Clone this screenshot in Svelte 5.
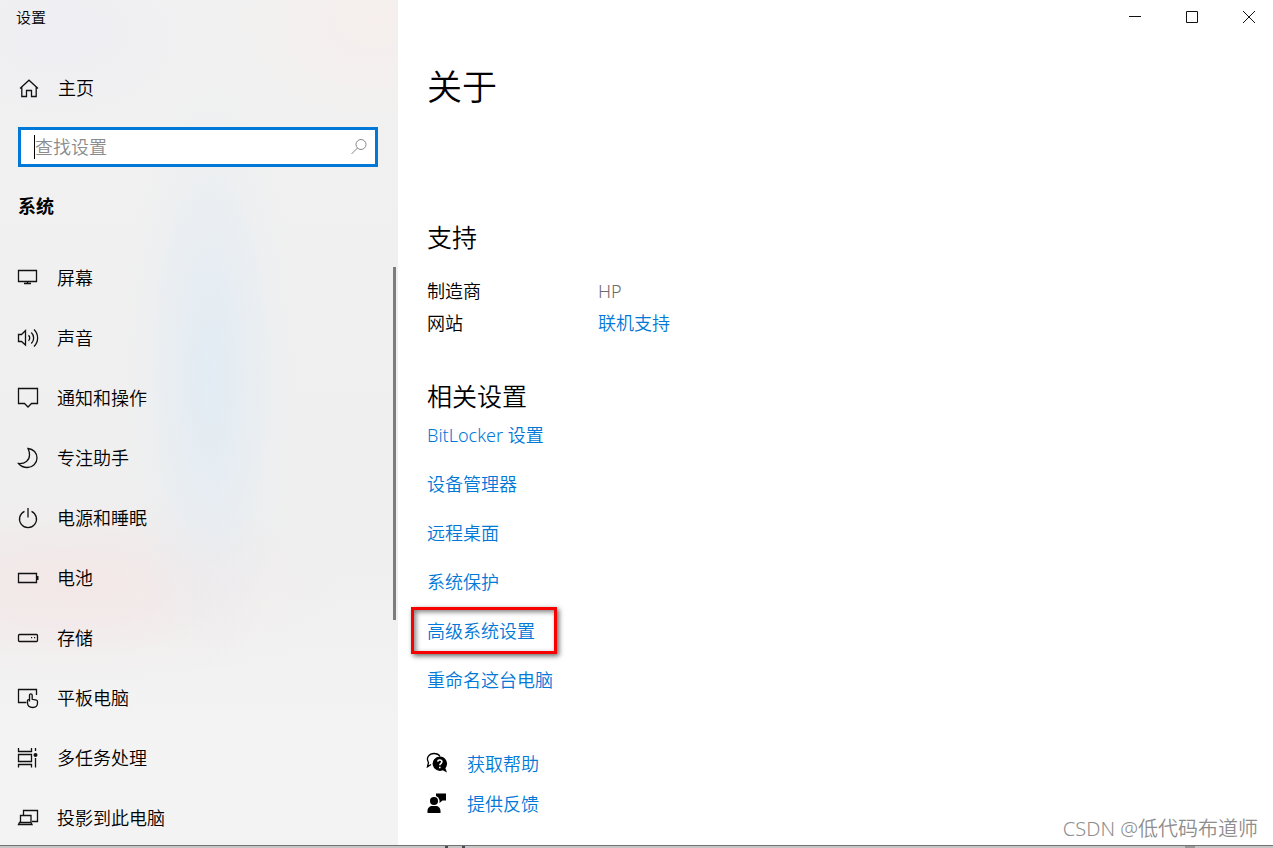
<script lang="ts">
    type IconName =
        | "display"
        | "sound"
        | "notifications"
        | "focus"
        | "power"
        | "battery"
        | "storage"
        | "tablet"
        | "multitask"
        | "project";

    const navItems: { icon: IconName; label: string }[] = [
        { icon: "display", label: "屏幕" },
        { icon: "sound", label: "声音" },
        { icon: "notifications", label: "通知和操作" },
        { icon: "focus", label: "专注助手" },
        { icon: "power", label: "电源和睡眠" },
        { icon: "battery", label: "电池" },
        { icon: "storage", label: "存储" },
        { icon: "tablet", label: "平板电脑" },
        { icon: "multitask", label: "多任务处理" },
        { icon: "project", label: "投影到此电脑" },
    ];

    const relatedLinks = [
        { label: "BitLocker 设置" },
        { label: "设备管理器" },
        { label: "远程桌面" },
        { label: "系统保护" },
        { label: "高级系统设置", marked: true },
        { label: "重命名这台电脑" },
    ];

    let query = $state("");
</script>

<div class="window">
    <aside class="sidebar">
        <div class="app-title">设置</div>

        <a class="home" href="#home">
            <svg class="icon" viewBox="0 0 22 22">
                <path d="M2 11.5 11 3.2l9 8.3M3.8 10v9.5h4.7v-6h5v6h4.7V10" />
            </svg>
            主页
        </a>

        <label class="search">
            <span class="caret"></span>
            <input type="text" placeholder="查找设置" aria-label="查找设置" bind:value={query} />
            <svg class="search-icon" viewBox="0 0 18 18">
                <circle cx="11" cy="6.5" r="5" />
                <path d="M7.5 10 1.5 16" />
            </svg>
        </label>

        <h2 class="category">系统</h2>

        <nav>
            {#each navItems as item (item.icon)}
                <a class="nav-item" href="#{item.icon}">
                    <svg class="icon" viewBox="0 0 22 22">
                        {#if item.icon === "display"}
                            <path d="M1.5 3.5h18v11h-18zM10.5 14.5v2M7 16.5h7" />
                        {:else if item.icon === "sound"}
                            <path d="M1.5 7.5h3l4-4V18l-4-3.5h-3z" />
                            <path d="M11.5 8.3a4 4 0 0 1 0 5.4M14.3 5.5a7.6 7.6 0 0 1 0 11M17 2.5a11.8 11.8 0 0 1 0 17" />
                        {:else if item.icon === "notifications"}
                            <path d="M1.5 1.5h19v15h-6L11 20l-3.5-3.5h-6z" />
                        {:else if item.icon === "focus"}
                            <path d="M11 1.5C16.5 2 20 6 20 11c0 5.5-4.5 9.5-9.5 9.5-3.5 0-7-1.5-9-4 6.5.5 11-3 11-8.5 0-2.5-.5-4.5-1.5-6.5z" />
                        {:else if item.icon === "power"}
                            <path d="M7.5 4.3a8.5 8.5 0 1 0 7 0M11 1v9.5" />
                        {:else if item.icon === "battery"}
                            <path d="M1.5 6.5h18v9h-18z" />
                            <path class="solid" d="M20 9h1.5v4H20z" />
                        {:else if item.icon === "storage"}
                            <rect x="1.5" y="7.5" width="19" height="7" rx="1" />
                            <path class="solid" d="M14 10h1.2v1.2H14zM17 10h1.2v1.2H17z" />
                        {:else if item.icon === "tablet"}
                            <path d="M9.5 15.5h-8v-13h18V8" />
                            <path d="M12.5 14.5V8.3c0-2 2.7-2 2.7 0v4l4.3.9c.7.2 1 .6 1 1.3V16c0 3-2 4.5-4.7 4.5-3.3 0-5.3-2-5.3-5v-2c0-1.300 2-1.300 2 0" />
                        {:else if item.icon === "multitask"}
                            <path d="M1.5 1v3.5h13V1M1.5 7.5h13v7h-13zM1.5 20.5v-3h13v3M18.5 1v3M18.5 11v9.5" />
                            <circle class="solid" cx="18.5" cy="8" r="2" />
                        {:else}
                            <path d="M6.5 8V3.5h14v11H15M3.5 15.5v-7H14v7M1.5 17.5l1-2H14l1 2z" />
                        {/if}
                    </svg>
                    {item.label}
                </a>
            {/each}
            <span class="scroll-thumb"></span>
        </nav>
    </aside>

    <main>
        <div class="window-controls">
            <button aria-label="最小化">
                <svg viewBox="0 0 14 14"><path d="M1 6.5h12" /></svg>
            </button>
            <button aria-label="最大化">
                <svg viewBox="0 0 14 14"><path d="M1.5 1.5h11v11h-11z" /></svg>
            </button>
            <button aria-label="关闭">
                <svg viewBox="0 0 14 14"><path d="m1 1 12 12M13 1 1 13" /></svg>
            </button>
        </div>

        <h1>关于</h1>

        <section class="support">
            <h2>支持</h2>
            <dl>
                <dt>制造商</dt>
                <dd>HP</dd>
                <dt>网站</dt>
                <dd><a href="#support">联机支持</a></dd>
            </dl>
        </section>

        <section class="related">
            <h2>相关设置</h2>
            <ul>
                {#each relatedLinks as link (link.label)}
                    <li><a href="#related" class:marked={link.marked}>{link.label}</a></li>
                {/each}
            </ul>
        </section>

        <div class="help">
            <a href="#help">
                <svg class="help-icon" viewBox="1 1 22 22">
                    <path class="outline" d="M5 12.5 1.5 14.8l1-4.3C-.5 5.5 3.5 1.5 8 1.5c3 0 5 1.3 6 3" />
                    <path d="M13.7 4.5a7.2 7.2 0 1 0 3 13.8l4.3 2.2-1.6-4.3A7.2 7.2 0 0 0 13.7 4.5z" />
                    <path class="knockout" d="M11.7 9.6c.2-2.2 4.2-2 4.2.2 0 1.5-2.1 1.5-2.1 3.5M13.8 14.7v1.5" />
                </svg>
                获取帮助
            </a>
            <a href="#feedback">
                <svg class="help-icon" viewBox="1 1 22 22">
                    <circle cx="8" cy="9" r="4" />
                    <path d="M1.5 21v-2c0-3 2-5 5-5h3c3 0 5 2 5 5v2zM10 1.5h10v7h-3.5L13.500 11V8A5.800 5.800 0 0 0 10 4z" />
                </svg>
                提供反馈
            </a>
        </div>

        <div class="watermark">CSDN @低代码布道师</div>
    </main>
</div>

<style>
    :global(body) {
        margin: 0;
    }

    .window {
        height: 100vh;
        display: grid;
        grid-template-columns: 398px 1fr;
        grid-template-rows: minmax(0, 1fr) 3px;
        overflow: hidden;
        background: #fff;
        color: #000;
        font-family: "Noto Sans", "Noto Sans CJK SC", sans-serif;
        font-size: 18px;
        font-weight: 350;
        line-height: 32px;

        /* sliver of the desktop below the window edge */
        &::after {
            content: "";
            grid-column: 1 / -1;
            border-top: 1px solid #737373;
            background:
                linear-gradient(#4c4958, #4c4958) 445px 0 / 3px 2px no-repeat,
                linear-gradient(#4c4958, #4c4958) 462px 0 / 3px 2px no-repeat,
                linear-gradient(#999, #999) 1185px 0 / 10px 2px no-repeat,
                #c6c6c6;
        }
    }

    a {
        color: #0078d7;
        text-decoration: none;
    }

    h1,
    h2,
    dl,
    dd,
    ul {
        margin: 0;
        padding: 0;
    }

    svg {
        fill: none;
        stroke: #111;
        stroke-width: 1.3;
        flex: none;
    }

    .sidebar {
        overflow: hidden;
        background:
            radial-gradient(ellipse 85px 300px at 211px 375px, rgb(218 233 246 / 60%), rgb(218 233 246 / 48%) 30%, rgb(218 233 246 / 14%) 70%, rgb(218 233 246 / 0%)),
            radial-gradient(ellipse 270px 100px at 70px 588px, rgb(246 224 224 / 50%), rgb(246 224 224 / 40%) 30%, rgb(246 224 224 / 12%) 70%, rgb(246 224 224 / 0%)),
            radial-gradient(ellipse 150px 110px at 375px 20px, rgb(250 236 232 / 50%), rgb(250 236 232 / 0%)),
            radial-gradient(ellipse 150px 100px at 60px 30px, rgb(236 236 246 / 50%), rgb(236 236 246 / 0%)),
            linear-gradient(#f1f1f1, #efefef 65%, #f3f3f3 85%);
    }

    .app-title {
        padding-left: 16px;
        font-size: 15px;
        line-height: 34px;
    }

    .home {
        display: flex;
        align-items: center;
        gap: 18px;
        height: 40px;
        margin-top: 34px;
        padding-left: 18px;
        color: #000;
    }

    .icon {
        width: 22px;
        height: 22px;
    }

    .solid {
        fill: #111;
        stroke: none;
    }

    .search {
        box-sizing: border-box;
        display: flex;
        align-items: center;
        height: 40px;
        margin: 19px 20px 0 18px;
        padding: 0 7px 0 13px;
        border: 3px solid #0078d7;
        background: #fff;
    }

    .caret {
        width: 1px;
        height: 24px;
        background: #000;
    }

    input {
        flex: 1;
        min-width: 0;
        padding: 0;
        border: 0;
        outline: 0;
        background: none;
        font: inherit;

        &::placeholder {
            color: #8c8c8c;
            opacity: 1;
        }
    }

    .search-icon {
        width: 18px;
        height: 18px;
        stroke: #888;
        stroke-width: 1;
    }

    .category {
        margin: 23px 0 26px 18px;
        font-size: 18px;
        font-weight: 700;
        line-height: 32px;
    }

    nav {
        position: relative;
    }

    .nav-item {
        display: flex;
        align-items: center;
        gap: 18px;
        height: 60px;
        padding-left: 17px;
        color: #000;
    }

    .scroll-thumb {
        position: absolute;
        top: 19px;
        right: 2px;
        width: 3px;
        height: 353px;
        background: #7d7d7d;
    }

    main {
        position: relative;
        min-width: 0;
        overflow: hidden;
        padding-left: 29px;
    }

    .window-controls {
        display: flex;
        justify-content: flex-end;
        gap: 43px;
        height: 34px;
        padding-right: 17px;

        & button {
            display: flex;
            align-items: center;
            width: 14px;
            padding: 0;
            border: 0;
            background: none;
        }

        & svg {
            width: 14px;
            height: 14px;
            stroke-width: 1;
        }
    }

    h1 {
        margin-top: 29px;
        font-size: 35px;
        font-weight: 350;
        line-height: 48px;
    }

    section h2 {
        font-size: 25px;
        font-weight: 350;
        line-height: 27px;
    }

    .support {
        margin-top: 113px;
    }

    dl {
        display: grid;
        grid-template-columns: 171px 1fr;
        margin-top: 24px;
    }

    dd {
        color: #6b6b6b;
    }

    .related {
        margin-top: 44px;

        & ul {
            list-style: none;
        }

        & li {
            display: flex;
            align-items: center;
            height: 49px;
        }
    }

    .marked {
        position: relative;

        &::after {
            content: "";
            position: absolute;
            inset: -8px -22px -7px -16px;
            border: 3px solid #f80000;
            box-shadow:
                2px 2px 5px rgb(0 0 0 / 60%),
                inset 2px 2px 5px rgb(0 0 0 / 50%);
        }
    }

    .help {
        margin-top: 40px;

        & a {
            display: flex;
            align-items: center;
            gap: 18px;
            height: 40px;
        }
    }

    .help-icon {
        width: 22px;
        height: 22px;
        overflow: visible;
        fill: #000;
        stroke: none;
    }

    .outline {
        fill: none;
        stroke: #000;
    }

    .knockout {
        fill: none;
        stroke: #fff;
        stroke-width: 1.6;
    }

    .watermark {
        position: absolute;
        right: 15px;
        bottom: 0;
        color: #8e8e8e;
        font-size: 20px;
    }
</style>
